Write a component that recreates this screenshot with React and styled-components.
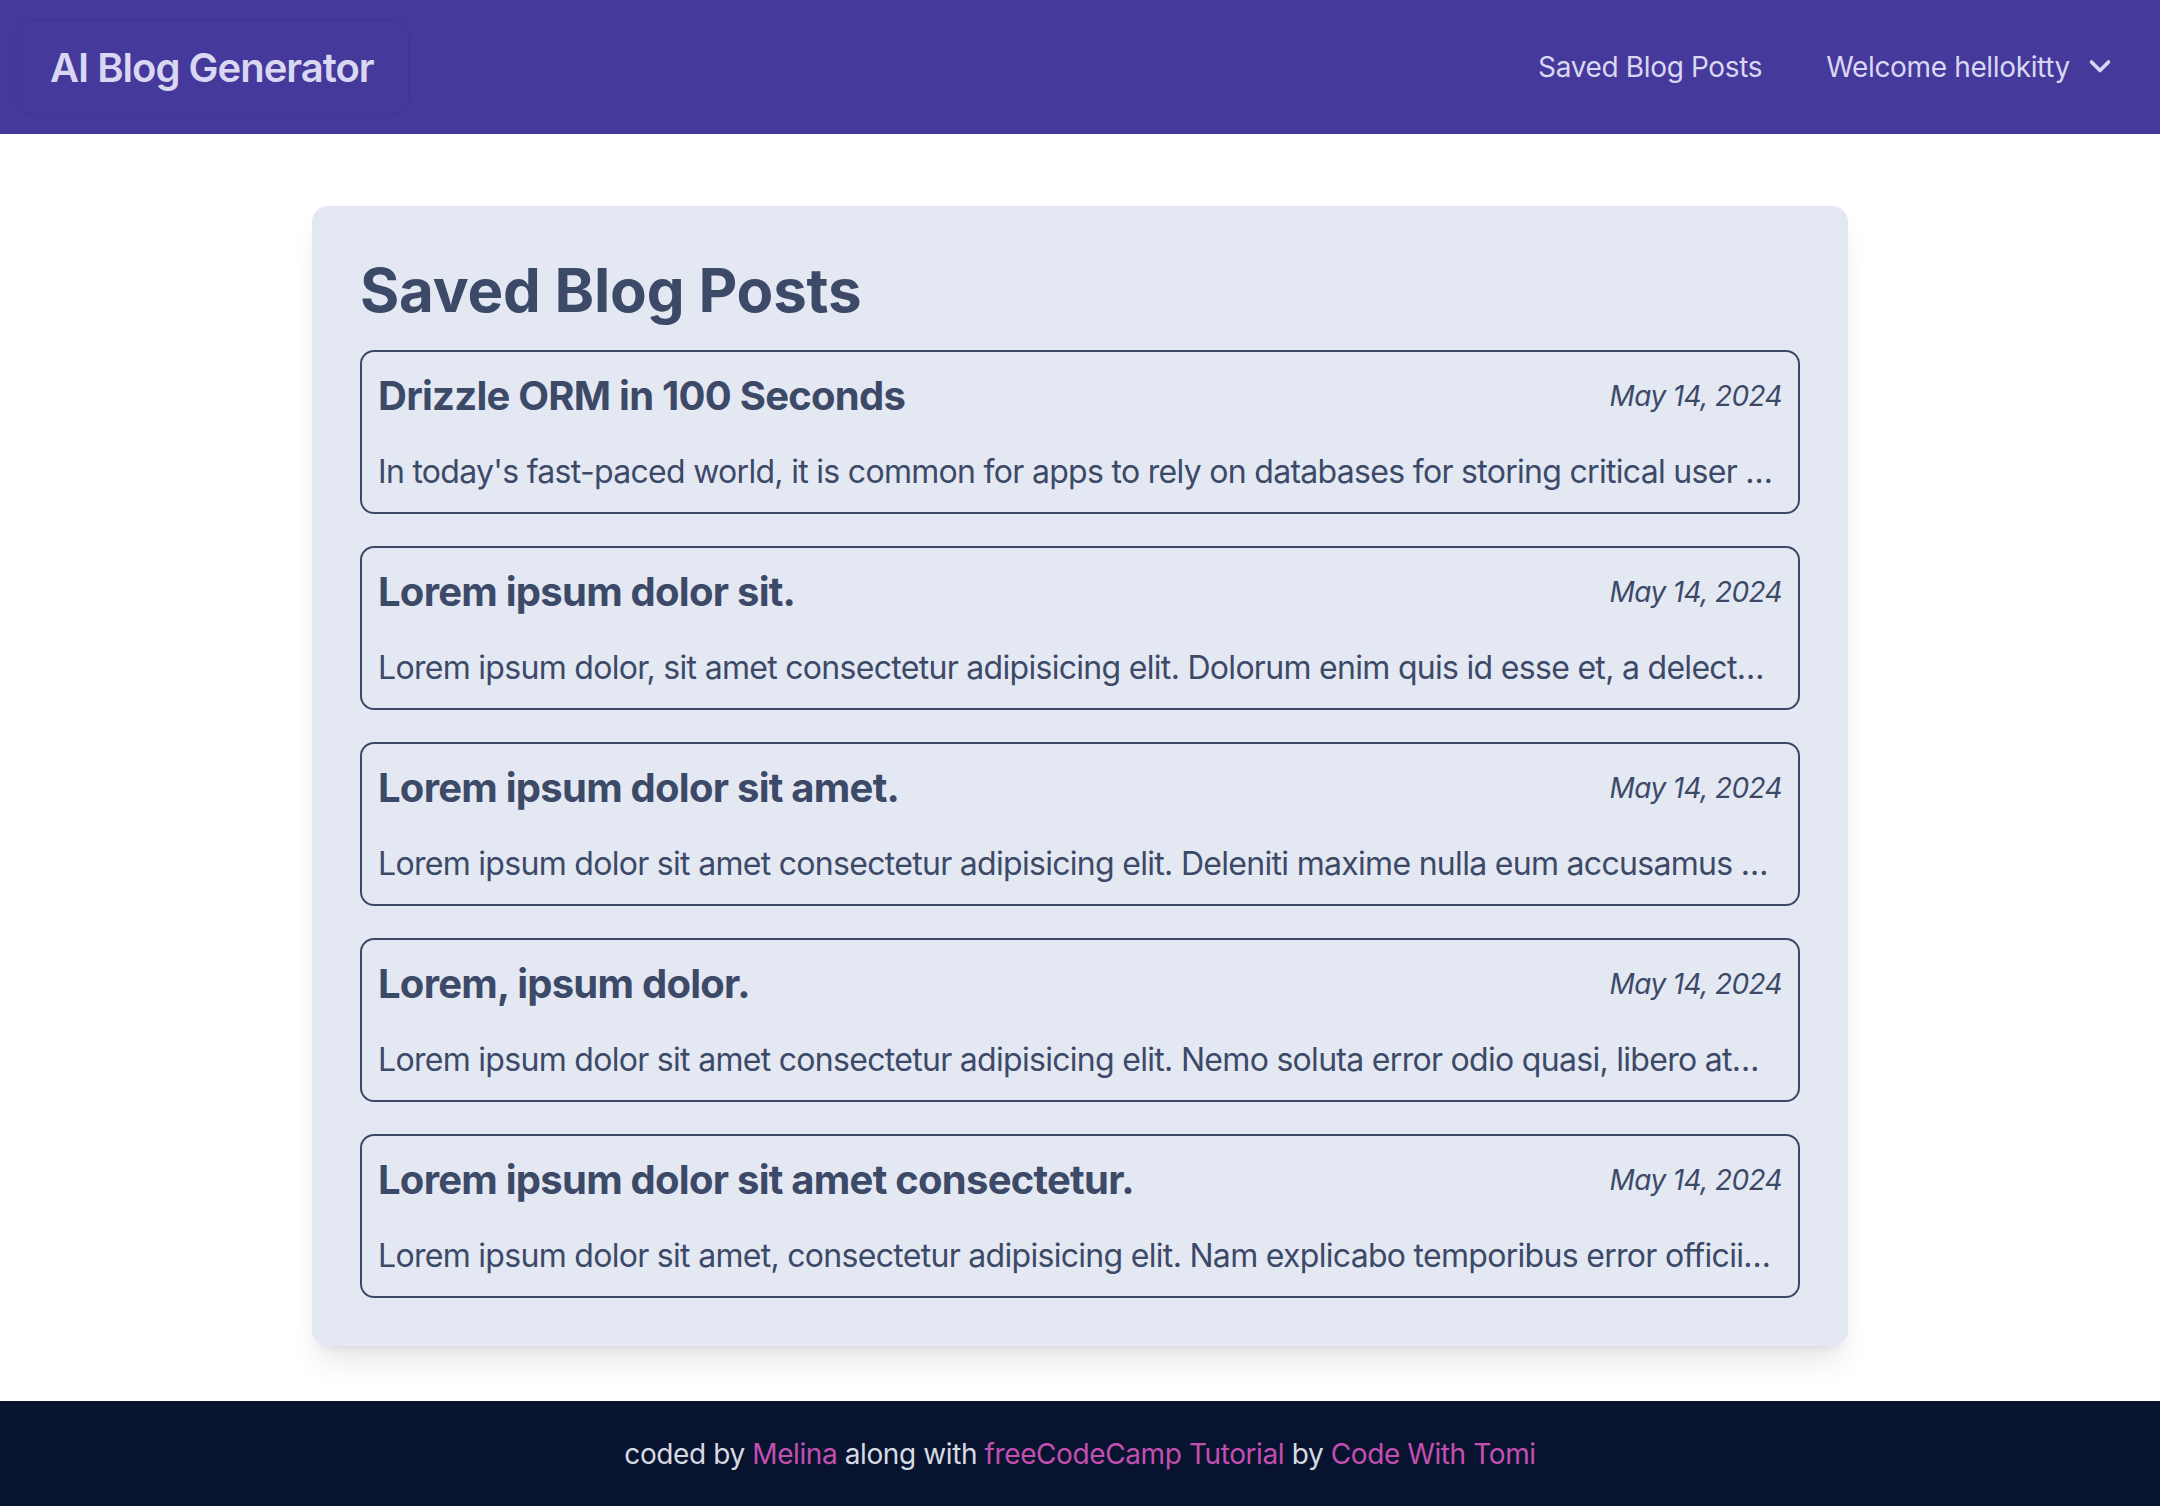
import React from "react";
import styled, { createGlobalStyle } from "styled-components";

const GlobalStyle = createGlobalStyle`
  * {
    box-sizing: border-box;
  }
  body {
    margin: 0;
    font-family: Inter, "Noto Sans", "Liberation Sans", sans-serif;
    background: #ffffff;
  }
`;

const posts = [
  {
    title: "Drizzle ORM in 100 Seconds",
    date: "May 14, 2024",
    body: "In today's fast-paced world, it is common for apps to rely on databases for storing critical user …",
  },
  {
    title: "Lorem ipsum dolor sit.",
    date: "May 14, 2024",
    body: "Lorem ipsum dolor, sit amet consectetur adipisicing elit. Dolorum enim quis id esse et, a delect…",
  },
  {
    title: "Lorem ipsum dolor sit amet.",
    date: "May 14, 2024",
    body: "Lorem ipsum dolor sit amet consectetur adipisicing elit. Deleniti maxime nulla eum accusamus …",
  },
  {
    title: "Lorem, ipsum dolor.",
    date: "May 14, 2024",
    body: "Lorem ipsum dolor sit amet consectetur adipisicing elit. Nemo soluta error odio quasi, libero at…",
  },
  {
    title: "Lorem ipsum dolor sit amet consectetur.",
    date: "May 14, 2024",
    body: "Lorem ipsum dolor sit amet, consectetur adipisicing elit. Nam explicabo temporibus error officii…",
  },
];

const App = () => {
  return (
    <Page>
      <GlobalStyle />
      <Navbar>
        <Logo>AI Blog Generator</Logo>
        <NavLinks>
          <NavButton>Saved Blog Posts</NavButton>
          <NavButton>
            Welcome hellokitty
            <Chevron width="24" height="16" viewBox="0 0 24 16">
              <polyline points="3.5,3 12,11.5 20.5,3" />
            </Chevron>
          </NavButton>
        </NavLinks>
      </Navbar>

      <Main>
        <Panel>
          <Heading>Saved Blog Posts</Heading>
          <PostList>
            {posts.map((post, i) => (
              <PostCard key={i}>
                <PostHead>
                  <PostTitle>{post.title}</PostTitle>
                  <PostDate>{post.date}</PostDate>
                </PostHead>
                <PostBody>{post.body}</PostBody>
              </PostCard>
            ))}
          </PostList>
        </Panel>
      </Main>

      <Footer>
        coded by <FooterLink>Melina</FooterLink> along with{" "}
        <FooterLink>freeCodeCamp Tutorial</FooterLink> by{" "}
        <FooterLink>Code With Tomi</FooterLink>
      </Footer>
    </Page>
  );
};

const Page = styled.div`
  min-height: 100vh;
  display: flex;
  flex-direction: column;
`;

const Navbar = styled.header`
  height: 134px;
  background: #45399b;
  display: flex;
  align-items: center;
  justify-content: space-between;
  padding: 0 16px 0 15px;
`;

const Logo = styled.div`
  height: 96px;
  display: flex;
  align-items: center;
  padding: 0 34px 0 33px;
  border-radius: 16px;
  border: 2px solid rgba(20, 10, 70, 0.04);
  color: #d9d7f1;
  font-size: 40px;
  font-weight: 600;
  letter-spacing: -1px;
`;

const NavLinks = styled.nav`
  display: flex;
  align-items: center;
`;

const NavButton = styled.div`
  height: 96px;
  display: flex;
  align-items: center;
  padding: 0 32px;
  color: #d9d7f1;
  font-size: 28px;
  font-weight: 400;
  letter-spacing: -0.35px;
  cursor: pointer;
`;

const Chevron = styled.svg`
  margin-left: 18px;
  fill: none;
  stroke: #d9d7f1;
  stroke-width: 3.6;
  stroke-linecap: round;
  stroke-linejoin: round;
`;

const Main = styled.main`
  flex: 1;
  padding: 72px 0 55px;
`;

const Panel = styled.section`
  width: 1536px;
  margin: 0 auto;
  background: #e4e8f3;
  border-radius: 16px;
  padding: 48px;
  box-shadow: 0 20px 30px -6px rgba(0, 0, 0, 0.1),
    0 8px 12px -8px rgba(0, 0, 0, 0.1);
  color: #3c4a68;
`;

const Heading = styled.h1`
  margin: 0 0 24px;
  font-size: 60px;
  line-height: 72px;
  font-weight: 700;
  letter-spacing: -0.2px;
`;

const PostList = styled.div`
  display: flex;
  flex-direction: column;
  gap: 32px;
`;

const PostCard = styled.article`
  border: 2px solid #3c4a68;
  border-radius: 14px;
  padding: 16px;
  cursor: pointer;
`;

const PostHead = styled.div`
  display: flex;
  align-items: center;
  justify-content: space-between;
  gap: 24px;
`;

const PostTitle = styled.h2`
  margin: 0;
  font-size: 40px;
  line-height: 56px;
  font-weight: 700;
  letter-spacing: -0.75px;
`;

const PostDate = styled.span`
  font-size: 28px;
  line-height: 40px;
  font-style: italic;
  letter-spacing: -0.6px;
  white-space: nowrap;
`;

const PostBody = styled.p`
  margin: 24px 0 0;
  font-size: 32px;
  line-height: 48px;
  letter-spacing: -0.7px;
  white-space: nowrap;
  overflow: hidden;
  text-overflow: ellipsis;
`;

const Footer = styled.footer`
  height: 105px;
  background: #08142f;
  color: #d6dae2;
  font-size: 28px;
  letter-spacing: -0.4px;
  display: flex;
  align-items: center;
  justify-content: center;
  white-space: pre;
`;

const FooterLink = styled.a`
  color: #c34fb1;
  cursor: pointer;
`;

export default App;
